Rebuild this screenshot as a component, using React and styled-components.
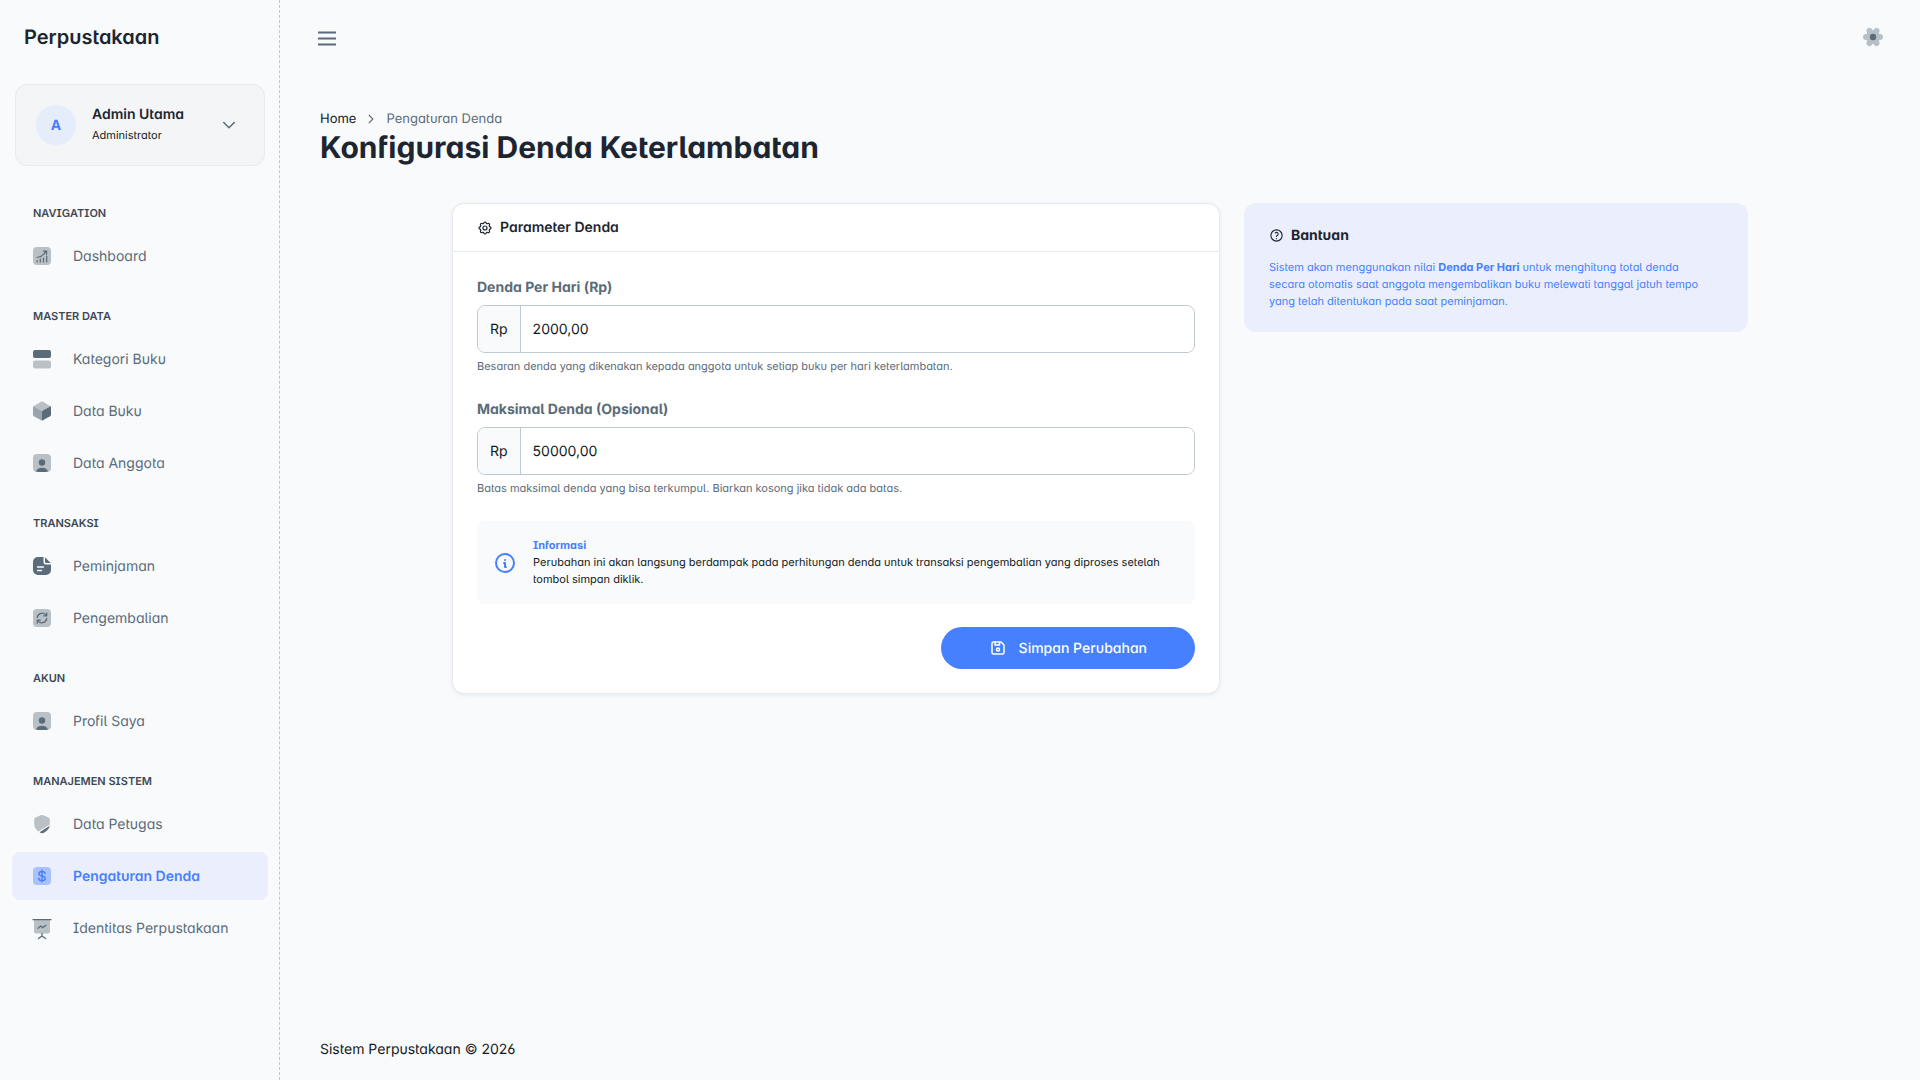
import React from 'react'
import styled, { createGlobalStyle, css } from 'styled-components'
import { TbDeviceFloppy, TbHelp, TbInfoCircle, TbSettings } from 'react-icons/tb'

const colors = {
  page: '#f8fafc',
  primary: '#4680ff',
  primaryLight: '#ebeffd',
  heading: '#1d2630',
  body: '#131920',
  muted: '#5b6b79',
  line: '#e7eaee',
  inputLine: '#bec8d0',
}

const GlobalStyle = createGlobalStyle`
  *, *::before, *::after { box-sizing: border-box; }
  body {
    margin: 0;
    background: ${colors.page};
    color: ${colors.body};
    font-family: Inter, sans-serif;
    font-size: 14px;
    line-height: 21px;
    font-feature-settings: 'salt', 'cv11', 'cv05';
    text-rendering: geometricPrecision;
  }
  button, input {
    font: inherit;
    font-feature-settings: inherit;
    text-rendering: inherit;
    color: inherit;
  }
  a { color: inherit; text-decoration: none; }
  h1, h2, p, ul, ol { margin: 0; padding: 0; }
  svg { display: block; flex: none; }
`

const Layout = styled.div`
  display: flex;
  min-height: 100vh;
`

const Sidebar = styled.aside`
  flex: none;
  width: 280px;
  border-right: 1px dashed #bec8d0;
`

const Brand = styled.a`
  display: flex;
  align-items: center;
  height: 74px;
  padding: 0 24px;
  color: ${colors.heading};
  font-size: 20px;
  font-weight: 600;
`

const UserCard = styled.button`
  display: flex;
  align-items: center;
  gap: 16px;
  width: 250px;
  height: 82px;
  margin: 10px 15px 15px;
  padding: 0 28px 0 20px;
  border: 1px solid ${colors.line};
  border-radius: 12px;
  background: #f3f5f7;
  text-align: left;
`

const Avatar = styled.span`
  display: flex;
  align-items: center;
  justify-content: center;
  width: 40px;
  height: 40px;
  border-radius: 50%;
  background: #e6edfa;
  color: ${colors.primary};
  font-weight: 700;
`

const UserText = styled.span`
  flex: 1;
  display: flex;
  flex-direction: column;
`

const UserName = styled.span`
  color: ${colors.heading};
  font-weight: 600;
`

const UserRole = styled.span`
  font-size: 11px;
`

const NavCaption = styled.h2`
  padding: 23px 33px 9px;
  color: #3e4853;
  font-size: 11px;
  font-weight: 600;
  line-height: 19px;
  text-transform: uppercase;
`

const NavList = styled.ul`
  list-style: none;
`

const NavLink = styled.a`
  display: flex;
  align-items: center;
  gap: 22px;
  height: 48px;
  margin: 0 11px 4px 12px;
  padding: 0 21px;
  border-radius: 8px;
  color: ${colors.muted};
  ${(props) => props.$active && css`
    background: ${colors.primaryLight};
    color: ${colors.primary};
    font-weight: 600;
  `}
`

const Main = styled.div`
  flex: 1;
  display: flex;
  flex-direction: column;
  min-width: 0;
`

const TopBar = styled.header`
  display: flex;
  align-items: center;
  justify-content: space-between;
  height: 74px;
  padding: 0 36px;
`

const IconButton = styled.button`
  padding: 0;
  border: 0;
  background: none;
  color: ${colors.muted};
`

const Content = styled.main`
  flex: 1;
  padding: 35px 40px 0;
`

const Breadcrumb = styled.ol`
  display: flex;
  align-items: center;
  gap: 10px;
  list-style: none;
  font-size: 13px;
  line-height: 20px;
`

const Crumb = styled.li`
  color: ${(props) => (props.$current ? colors.muted : colors.body)};
`

const PageTitle = styled.h1`
  color: ${colors.heading};
  font-size: 30px;
  font-weight: 700;
  line-height: 38px;
`

const Columns = styled.div`
  display: grid;
  grid-template-columns: 768fr 504fr;
  align-items: start;
  gap: 24px;
  max-width: 1296px;
  margin: 36px auto 0;
`

const Card = styled.section`
  border: 1px solid ${colors.line};
  border-radius: 12px;
  background: #fff;
  box-shadow: 0 1px 4px rgba(29, 38, 48, 0.08);
`

const CardTitle = styled.h2`
  display: flex;
  align-items: center;
  gap: 7px;
  color: ${colors.heading};
  font-size: 14px;
  font-weight: ${(props) => (props.$strong ? 700 : 600)};
`

const CardHeader = styled.div`
  padding: 13px 24px;
  border-bottom: 1px solid ${colors.line};
`

const CardBody = styled.form`
  padding: 25px 24px 24px;
`

const Field = styled.div`
  margin-bottom: 24px;
`

const Label = styled.label`
  display: block;
  margin-bottom: 7px;
  color: ${colors.muted};
  font-weight: 700;
`

const InputGroup = styled.div`
  display: flex;
  height: 48px;
  overflow: hidden;
  border: 1px solid ${colors.inputLine};
  border-radius: 8px;
`

const Prefix = styled.span`
  display: flex;
  align-items: center;
  padding: 0 12px;
  border-right: 1px solid ${colors.inputLine};
  background: ${colors.page};
`

const Input = styled.input`
  flex: 1;
  min-width: 0;
  padding: 0 12px;
  border: 0;
  background: #fff;
`

const Hint = styled.p`
  margin-top: 5px;
  color: ${colors.muted};
  font-size: 11px;
  line-height: 17px;
`

const Notice = styled.div`
  display: flex;
  align-items: center;
  gap: 16px;
  padding: 16px;
  border-radius: 8px;
  background: ${colors.page};
  font-size: 11px;
  line-height: 17px;
  svg { color: ${colors.primary}; }
`

const NoticeTitle = styled.strong`
  display: block;
  color: ${colors.primary};
  font-weight: 700;
`

const Actions = styled.div`
  display: flex;
  justify-content: flex-end;
  margin-top: 23px;
`

const SaveButton = styled.button`
  display: flex;
  align-items: center;
  gap: 12px;
  height: 42px;
  padding: 0 48px;
  border: 0;
  border-radius: 21px;
  background: ${colors.primary};
  color: #fff;
  font-weight: 500;
`

const HelpCard = styled.aside`
  padding: 22px 32px 22px 25px;
  border-radius: 12px;
  background: ${colors.primaryLight};
`

const HelpText = styled.p`
  margin-top: 13px;
  color: ${colors.primary};
  font-size: 11px;
  line-height: 17px;
`

const Footer = styled.footer`
  padding: 20px 40px;
`

const icons = {
  chart: (
    <>
      <rect width="18" height="18" rx="4" fill="currentColor" opacity=".4" />
      <path d="M4.200 15v-1.500M7.300 15v-3M10.500 15v-4M13.700 15V9M4 10.500c4-.6 7-2.500 9-6.200M10.300 4.100h3.300v3.200" fill="none" stroke="currentColor" strokeWidth="1.200" strokeLinecap="round" />
    </>
  ),
  rows: (
    <>
      <rect width="18" height="8" rx="2" fill="currentColor" />
      <rect y="10.500" width="18" height="8" rx="2" fill="currentColor" opacity=".4" />
    </>
  ),
  box: (
    <>
      <path d="M8 -.2a2 2 0 0 1 2 0L17.600 4.200 9 9 .4 4.200z" fill="currentColor" opacity=".4" />
      <path d="M.4 4.200L9 9v9.700L1 14.300A2 2 0 0 1 0 12.600V5z" fill="currentColor" opacity=".6" />
      <path d="M17.600 4.200L9 9v9.700l8-4.400a2 2 0 0 0 1-1.700V5z" fill="currentColor" />
    </>
  ),
  user: (
    <>
      <rect width="18" height="18" rx="4" fill="currentColor" opacity=".4" />
      <circle cx="9" cy="8.500" r="3.200" fill="currentColor" />
      <path d="M3 17.300C4 14.800 6.300 13.800 9 13.800s5 1 6 3.500c-.6.500-1.300.7-2 .7H5c-.7 0-1.400-.2-2-.7z" fill="currentColor" />
    </>
  ),
  file: (
    <>
      <path d="M10.500 0H5a5 5 0 0 0-5 5v8a5 5 0 0 0 5 5h8a5 5 0 0 0 5-5V7.500h-5A2.500 2.500 0 0 1 10.500 5z" fill="currentColor" />
      <path d="M12 .2V5a1 1 0 0 0 1 1h4.700z" fill="currentColor" />
      <path d="M4.500 10h6M4.500 13.500h4" stroke="#fff" strokeWidth="1.300" strokeLinecap="round" />
    </>
  ),
  sync: (
    <>
      <rect width="18" height="18" rx="4" fill="currentColor" opacity=".4" />
      <path d="M4.200 8.300A5 5 0 0 1 13.300 6.500M13.800 9.700A5 5 0 0 1 4.700 11.500M13.700 3.800v3h-3M4.300 14.200v-3h3" fill="none" stroke="currentColor" strokeWidth="1.300" strokeLinecap="round" strokeLinejoin="round" />
    </>
  ),
  shield: (
    <>
      <path d="M8.300.1a2 2 0 0 1 1.400 0l5.800 2.400A2 2 0 0 1 16.800 4.400V9.500L5.500 16.500C3 14.500 1.200 12 1.200 9V4.400a2 2 0 0 1 1.300-1.900z" fill="currentColor" opacity=".4" />
      <path d="M16.700 10.800L6.600 17.200c1.500 1.200 3.200 1.300 4.700.3 3-1.900 5-3.800 5.400-6.700z" fill="currentColor" />
    </>
  ),
  dollar: (
    <>
      <rect width="18" height="18" rx="4" fill="currentColor" opacity=".4" />
      <path d="M12.200 6.600C12 5.200 10.800 4.500 9 4.500S5.900 5.300 5.900 6.700C5.900 8.200 7.200 8.600 9 9s3.200.9 3.200 2.400S10.800 13.600 9 13.600s-3.100-.8-3.300-2.300M9 3v12" fill="none" stroke="currentColor" strokeWidth="1.400" strokeLinecap="round" />
    </>
  ),
  board: (
    <>
      <path d="M1 1h16v11.500a2 2 0 0 1-2 2H3a2 2 0 0 1-2-2z" fill="currentColor" opacity=".4" />
      <path d="M0 .7h18M9 14.500V17M5.500 19.500L9 17l3.500 2.500M5 9.300l2.700-2.200 2 1.500L13 6.300" fill="none" stroke="currentColor" strokeWidth="1.300" strokeLinecap="round" />
    </>
  ),
}

const navGroups = [
  { caption: 'Navigation', items: [['Dashboard', 'chart']] },
  {
    caption: 'Master Data',
    items: [['Kategori Buku', 'rows'], ['Data Buku', 'box'], ['Data Anggota', 'user']],
  },
  { caption: 'Transaksi', items: [['Peminjaman', 'file'], ['Pengembalian', 'sync']] },
  { caption: 'Akun', items: [['Profil Saya', 'user']] },
  {
    caption: 'Manajemen Sistem',
    items: [['Data Petugas', 'shield'], ['Pengaturan Denda', 'dollar'], ['Identitas Perpustakaan', 'board']],
  },
]

const ACTIVE = 'Pengaturan Denda'

function NavIcon({ name }) {
  return (
    <svg width="18" height="18" viewBox="0 0 18 18" overflow="visible" aria-hidden="true">
      {icons[name]}
    </svg>
  )
}

function Chevron({ size, d }) {
  return (
    <svg width={size} height={size} viewBox="0 0 12 12" aria-hidden="true">
      <path d={d} fill="none" stroke={colors.muted} strokeWidth="1.300" strokeLinecap="round" />
    </svg>
  )
}

function MoneyField({ id, label, value, hint }) {
  return (
    <Field>
      <Label htmlFor={id}>{label}</Label>
      <InputGroup>
        <Prefix>Rp</Prefix>
        <Input id={id} type="text" defaultValue={value} />
      </InputGroup>
      <Hint>{hint}</Hint>
    </Field>
  )
}

function AppSidebar() {
  return (
    <Sidebar>
      <Brand href="#">Perpustakaan</Brand>
      <UserCard type="button">
        <Avatar>A</Avatar>
        <UserText>
          <UserName>Admin Utama</UserName>
          <UserRole>Administrator</UserRole>
        </UserText>
        <Chevron size={14} d="M1.500 3.800L6 8.300l4.500-4.500" />
      </UserCard>
      <nav>
        {navGroups.map((group) => (
          <React.Fragment key={group.caption}>
            <NavCaption>{group.caption}</NavCaption>
            <NavList>
              {group.items.map(([label, icon]) => (
                <li key={label}>
                  <NavLink href="#" $active={label === ACTIVE}>
                    <NavIcon name={icon} />
                    {label}
                  </NavLink>
                </li>
              ))}
            </NavList>
          </React.Fragment>
        ))}
      </nav>
    </Sidebar>
  )
}

export default function App() {
  return (
    <>
      <GlobalStyle />
      <Layout>
        <AppSidebar />
        <Main>
          <TopBar>
            <IconButton type="button" aria-label="Menu">
              <svg width="22" height="22" viewBox="0 0 22 22" aria-hidden="true">
                <path d="M2 6.500h18M2 12.500h18M2 18.500h18" stroke="currentColor" strokeWidth="1.900" />
              </svg>
            </IconButton>
            <IconButton type="button" aria-label="Settings">
              <svg width="22" height="22" viewBox="0 0 22 22" aria-hidden="true">
                <g fill="currentColor" opacity=".4">
                  <path d="M11 4a7 7 0 1 0 0 14a7 7 0 1 0 0-14z" />
                  {[0, 60, 120, 180, 240, 300].map((angle) => (
                    <circle key={angle} cx="18" cy="11" r="3" transform={`rotate(${angle} 11 11)`} />
                  ))}
                </g>
                <circle cx="11" cy="11" r="3.200" fill="currentColor" />
              </svg>
            </IconButton>
          </TopBar>
          <Content>
            <Breadcrumb>
              <Crumb><a href="#">Home</a></Crumb>
              <li><Chevron size={10} d="M3.800 1.500L8.300 6l-4.500 4.500" /></li>
              <Crumb $current>Pengaturan Denda</Crumb>
            </Breadcrumb>
            <PageTitle>Konfigurasi Denda Keterlambatan</PageTitle>
            <Columns>
              <Card>
                <CardHeader>
                  <CardTitle>
                    <TbSettings size={16} strokeWidth={1.8} />
                    Parameter Denda
                  </CardTitle>
                </CardHeader>
                <CardBody>
                  <MoneyField
                    id="denda-per-hari"
                    label="Denda Per Hari (Rp)"
                    value="2000,00"
                    hint="Besaran denda yang dikenakan kepada anggota untuk setiap buku per hari keterlambatan."
                  />
                  <MoneyField
                    id="maksimal-denda"
                    label="Maksimal Denda (Opsional)"
                    value="50000,00"
                    hint="Batas maksimal denda yang bisa terkumpul. Biarkan kosong jika tidak ada batas."
                  />
                  <Notice>
                    <TbInfoCircle size={24} />
                    <p>
                      <NoticeTitle>Informasi</NoticeTitle>
                      Perubahan ini akan langsung berdampak pada perhitungan denda untuk transaksi
                      pengembalian yang diproses setelah tombol simpan diklik.
                    </p>
                  </Notice>
                  <Actions>
                    <SaveButton type="button">
                      <TbDeviceFloppy size={18} />
                      Simpan Perubahan
                    </SaveButton>
                  </Actions>
                </CardBody>
              </Card>
              <HelpCard>
                <CardTitle $strong>
                  <TbHelp size={15} strokeWidth={1.8} />
                  Bantuan
                </CardTitle>
                <HelpText>
                  Sistem akan menggunakan nilai <strong>Denda Per Hari</strong> untuk menghitung total
                  denda secara otomatis saat anggota mengembalikan buku melewati tanggal jatuh tempo
                  yang telah ditentukan pada saat peminjaman.
                </HelpText>
              </HelpCard>
            </Columns>
          </Content>
          <Footer>Sistem Perpustakaan © 2026</Footer>
        </Main>
      </Layout>
    </>
  )
}
